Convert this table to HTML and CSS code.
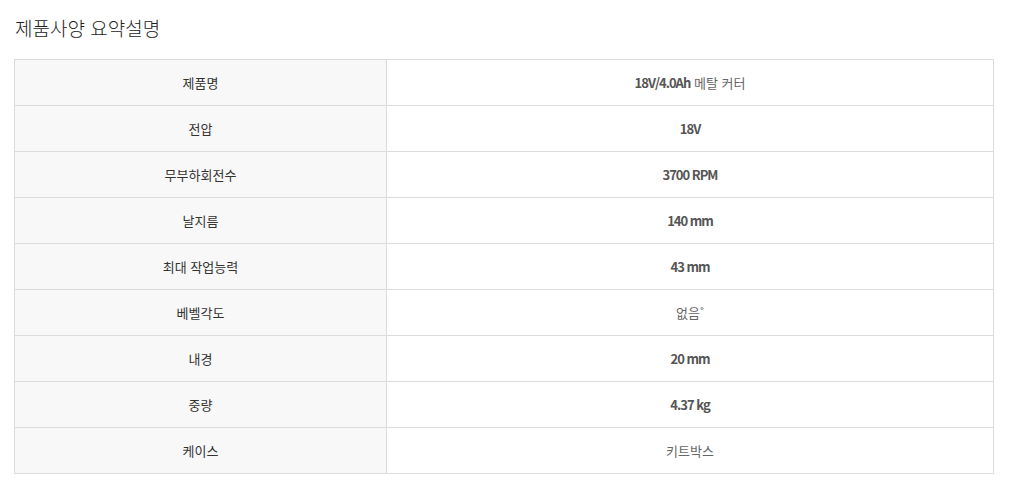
FILE: index.html
```html
<!DOCTYPE html>
<html lang="ko">
<head>
<meta charset="utf-8">
<link rel="stylesheet" href="styles.css">
</head>
<body>
<div class="wrap">
  <h2 class="title">제품사양 요약설명</h2>
  <table class="spec">
    <tr><th>제품명</th><td><b>18V/4.0Ah</b> 메탈 커터</td></tr>
    <tr><th>전압</th><td><b>18V</b></td></tr>
    <tr><th>무부하회전수</th><td><b>3700 RPM</b></td></tr>
    <tr><th>날지름</th><td><b>140 mm</b></td></tr>
    <tr><th>최대 작업능력</th><td><b>43 mm</b></td></tr>
    <tr><th>베벨각도</th><td>없음˚</td></tr>
    <tr><th>내경</th><td><b>20 mm</b></td></tr>
    <tr><th>중량</th><td><b>4.37 kg</b></td></tr>
    <tr><th>케이스</th><td>키트박스</td></tr>
  </table>
</div>
</body>
</html>
```
FILE: styles.css
```css
html, body { margin: 0; padding: 0; background: #fff; }
body { font-family: "Noto Sans CJK KR", "Noto Sans", sans-serif; }
.wrap { padding: 14px 27px 0 14px; }
.title {
  margin: 0 0 17px 1px;
  font-size: 19px;
  line-height: 28px;
  font-weight: 300;
  color: #222;
}
.spec {
  width: 980px;
  border-collapse: collapse;
  table-layout: fixed;
}
.spec th, .spec td {
  border: 1px solid #dcdcdc;
  height: 45px;
  padding: 0;
  text-align: center;
  vertical-align: middle;
  font-size: 13px;
}
.spec th {
  width: 371px;
  background: #f8f8f8;
  font-weight: 400;
  color: #333;
}
.spec td { color: #666; }
.spec td b { font-weight: 700; color: #555; letter-spacing: -1px; }
```
